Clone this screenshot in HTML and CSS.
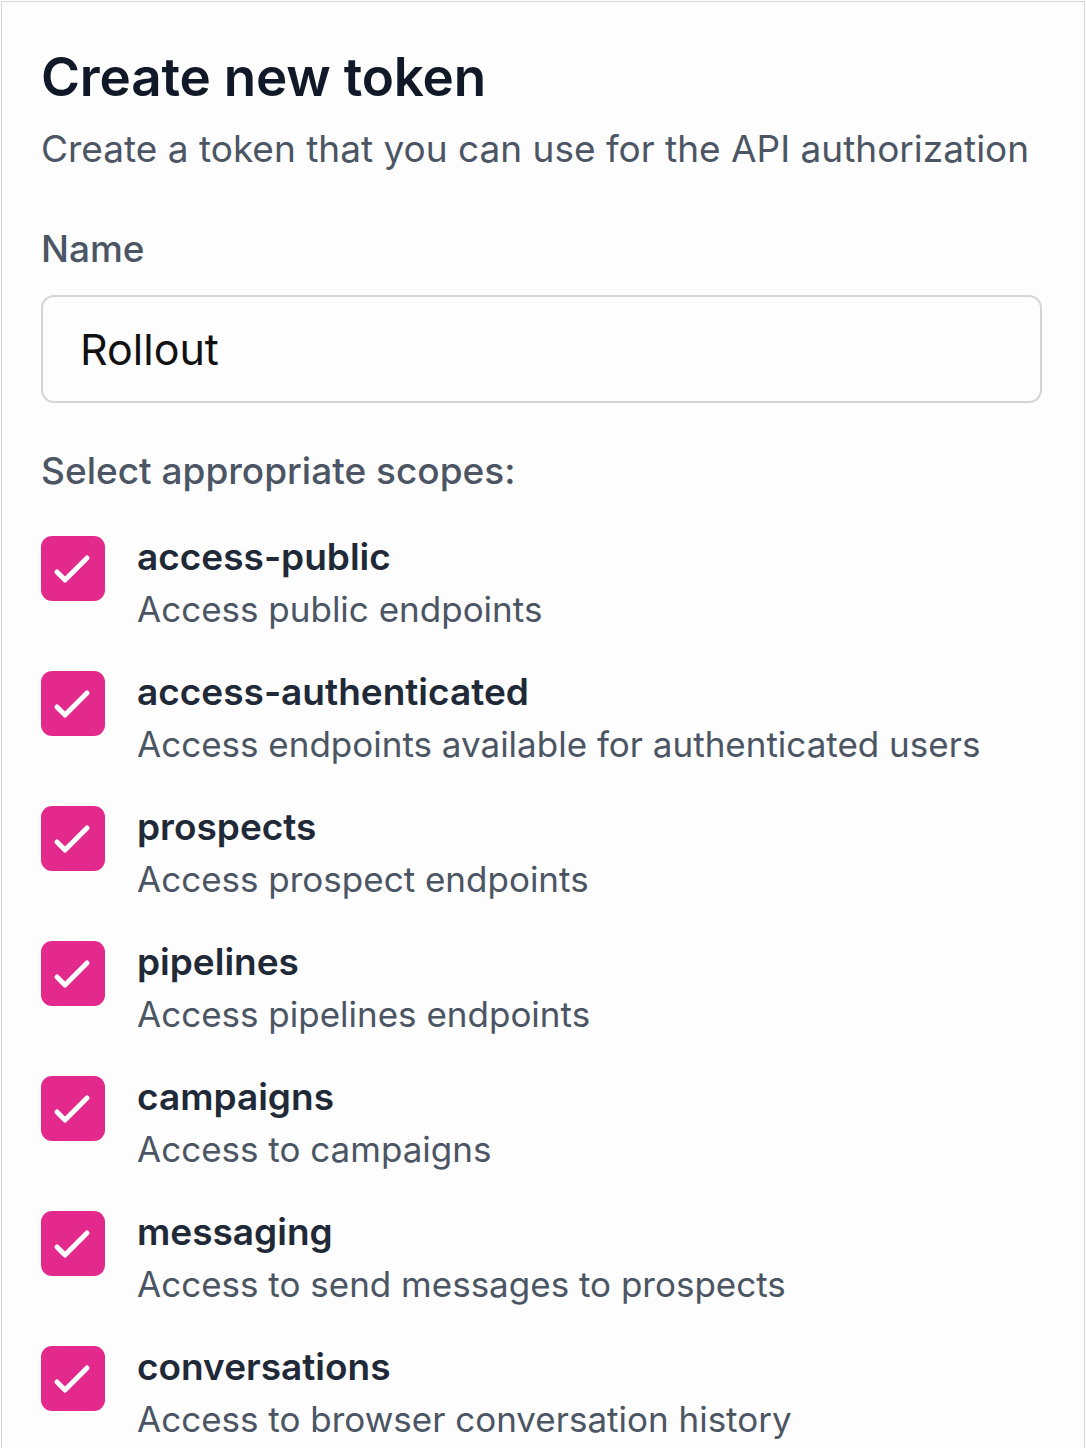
FILE: index.html
```html
<!DOCTYPE html>
<html lang="en">
<head>
<meta charset="utf-8">
<title>Create new token</title>
<link rel="stylesheet" href="styles.css">
</head>
<body>
<main class="card">
  <h1 class="title">Create new token</h1>
  <p class="subtitle">Create a token that you can use for the API authorization</p>

  <label class="label" for="token-name">Name</label>
  <input class="input" id="token-name" type="text" value="Rollout">

  <p class="label scopes-label">Select appropriate scopes:</p>

  <ul class="scopes">
    <li class="scope">
      <span class="check"><svg viewBox="0 0 64 64" width="64" height="64"><polyline points="16,35 24,43 46,21"/></svg></span>
      <div class="scope-text"><div class="scope-name">access-public</div><div class="scope-desc">Access public endpoints</div></div>
    </li>
    <li class="scope">
      <span class="check"><svg viewBox="0 0 64 64" width="64" height="64"><polyline points="16,35 24,43 46,21"/></svg></span>
      <div class="scope-text"><div class="scope-name">access-authenticated</div><div class="scope-desc">Access endpoints available for authenticated users</div></div>
    </li>
    <li class="scope">
      <span class="check"><svg viewBox="0 0 64 64" width="64" height="64"><polyline points="16,35 24,43 46,21"/></svg></span>
      <div class="scope-text"><div class="scope-name">prospects</div><div class="scope-desc">Access prospect endpoints</div></div>
    </li>
    <li class="scope">
      <span class="check"><svg viewBox="0 0 64 64" width="64" height="64"><polyline points="16,35 24,43 46,21"/></svg></span>
      <div class="scope-text"><div class="scope-name">pipelines</div><div class="scope-desc">Access pipelines endpoints</div></div>
    </li>
    <li class="scope">
      <span class="check"><svg viewBox="0 0 64 64" width="64" height="64"><polyline points="16,35 24,43 46,21"/></svg></span>
      <div class="scope-text"><div class="scope-name">campaigns</div><div class="scope-desc">Access to campaigns</div></div>
    </li>
    <li class="scope">
      <span class="check"><svg viewBox="0 0 64 64" width="64" height="64"><polyline points="16,35 24,43 46,21"/></svg></span>
      <div class="scope-text"><div class="scope-name">messaging</div><div class="scope-desc">Access to send messages to prospects</div></div>
    </li>
    <li class="scope">
      <span class="check"><svg viewBox="0 0 64 64" width="64" height="64"><polyline points="16,35 24,43 46,21"/></svg></span>
      <div class="scope-text"><div class="scope-name">conversations</div><div class="scope-desc">Access to browser conversation history</div></div>
    </li>
  </ul>
</main>
</body>
</html>
```
FILE: styles.css
```css
* { box-sizing: border-box; }
html, body { margin: 0; padding: 0; background: #ffffff; }
body {
  font-family: Inter, "Noto Sans", "Liberation Sans", sans-serif;
  color: #1f2937;
}
.card {
  margin: 1px 1px 0 1px;
  border: 1.5px solid #d6d6d6;
  border-bottom: none;
  min-height: 1447px;
  background: #fdfdfd;
  padding: 44px 42px 0 39px;
}
.title {
  margin: 0;
  font-size: 53px;
  line-height: 62px;
  font-weight: 600;
  color: #111827;
  letter-spacing: -0.2px;
}
.subtitle {
  margin: 17px 0 0;
  font-size: 37px;
  line-height: 48px;
  color: #4b5563;
  font-weight: 400;
}
.label {
  display: block;
  margin: 52px 0 0;
  font-size: 37px;
  line-height: 48px;
  font-weight: 500;
  color: #4b5563;
}
.input {
  display: block;
  width: 100%;
  height: 108px;
  margin-top: 22px;
  border: 2px solid #d4d4d4;
  border-radius: 13px;
  background: #fdfdfd;
  padding: 0 37px;
  font-family: inherit;
  font-size: 43px;
  color: #111111;
  outline: none;
}
.scopes-label { margin-top: 44px; }
.scopes {
  list-style: none;
  margin: 41px 0 0;
  padding: 0;
  display: flex;
  flex-direction: column;
  gap: 41px;
}
.scope {
  display: flex;
  align-items: flex-start;
  gap: 32px;
}
.check {
  flex: none;
  width: 64px;
  height: 65px;
  border-radius: 11px;
  background: #e3298b;
  display: flex;
  align-items: center;
  justify-content: center;
}
.check svg { display: block; }
.check polyline {
  fill: none;
  stroke: #ffffff;
  stroke-width: 5;
  stroke-linecap: round;
  stroke-linejoin: round;
}
.scope-text { display: flex; flex-direction: column; }
.scope-name {
  font-size: 37px;
  line-height: 44px;
  font-weight: 600;
  color: #1f2937;
  margin-top: -1px;
}
.scope-desc {
  margin-top: 9px;
  font-size: 35px;
  line-height: 42px;
  font-weight: 400;
  color: #4b5563;
}
```
